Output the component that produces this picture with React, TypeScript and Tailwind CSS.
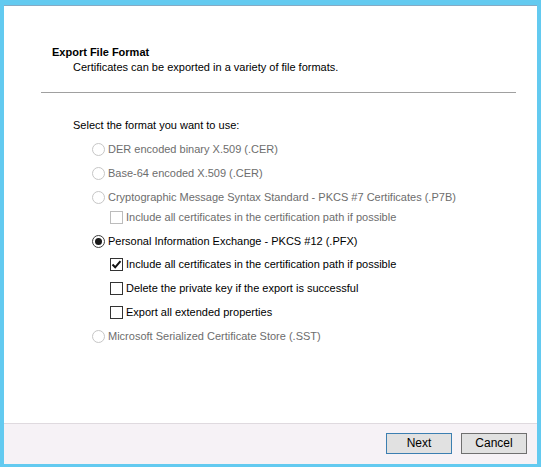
import React from "react";

const font = { fontFamily: '"Liberation Sans", Arial, sans-serif' };

const Radio = ({ checked, disabled }: { checked?: boolean; disabled?: boolean }) => (
  <span
    className={`flex h-[13px] w-[13px] shrink-0 items-center justify-center rounded-full border bg-white ${
      disabled ? "border-[#c6c6c6]" : "border-[#3c3c3c]"
    }`}
  >
    {checked && <span className="h-[7px] w-[7px] rounded-full bg-[#1a1a1a]" />}
  </span>
);

const Check = ({ checked, disabled }: { checked?: boolean; disabled?: boolean }) => (
  <span
    className={`flex h-[13px] w-[13px] shrink-0 items-center justify-center border bg-white ${
      disabled ? "border-[#bcbcbc]" : "border-[#333333]"
    }`}
  >
    {checked && (
      <svg width="11" height="11" viewBox="0 0 11 11">
        <path d="M1.5 5.5 L4.2 8.3 L9.5 2.2" fill="none" stroke="#111" strokeWidth="2" />
      </svg>
    )}
  </span>
);

type Row = {
  kind: "radio" | "check";
  label: string;
  checked?: boolean;
  disabled?: boolean;
  mt: string;
};

const rows: Row[] = [
  { kind: "radio", label: "DER encoded binary X.509 (.CER)", disabled: true, mt: "mt-[8px]" },
  { kind: "radio", label: "Base-64 encoded X.509 (.CER)", disabled: true, mt: "mt-[8px]" },
  {
    kind: "radio",
    label: "Cryptographic Message Syntax Standard - PKCS #7 Certificates (.P7B)",
    disabled: true,
    mt: "mt-[8px]",
  },
  {
    kind: "check",
    label: "Include all certificates in the certification path if possible",
    disabled: true,
    mt: "mt-[4px]",
  },
  { kind: "radio", label: "Personal Information Exchange - PKCS #12 (.PFX)", checked: true, mt: "mt-[8px]" },
  {
    kind: "check",
    label: "Include all certificates in the certification path if possible",
    checked: true,
    mt: "mt-[7px]",
  },
  { kind: "check", label: "Delete the private key if the export is successful", mt: "mt-[8px]" },
  { kind: "check", label: "Export all extended properties", mt: "mt-[8px]" },
  { kind: "radio", label: "Microsoft Serialized Certificate Store (.SST)", disabled: true, mt: "mt-[8px]" },
];

export default function App() {
  return (
    <div
      className="flex h-[467px] w-[541px] flex-col bg-[#63caf0] pb-[3px] pl-[4px] pr-[4px] pt-[5px] text-[11px] text-black"
      style={font}
    >
      <div className="flex flex-1 flex-col border-t border-[#86aac4] bg-white">
        <div className="flex-1 pt-[38px]">
          <div className="pl-[48px] font-bold leading-[16px]">Export File Format</div>
          <div className="mt-[-1px] pl-[69px] leading-[16px]">
            Certificates can be exported in a variety of file formats.
          </div>
          <div className="ml-[37px] mt-[17px] h-px w-[475px] bg-[#a0a0a0]" />
          <div className="mt-[24px] pl-[69px] leading-[16px]">Select the format you want to use:</div>
          {rows.map((r, i) => (
            <div
              key={i}
              className={`flex h-[16px] items-center ${r.mt} ${
                r.kind === "radio" ? "pl-[88px]" : "pl-[106px]"
              } ${r.disabled ? "text-[#6d6d6d]" : "text-black"}`}
            >
              {r.kind === "radio" ? (
                <Radio checked={r.checked} disabled={r.disabled} />
              ) : (
                <Check checked={r.checked} disabled={r.disabled} />
              )}
              <span className="ml-[3px]">{r.label}</span>
            </div>
          ))}
        </div>
        <div className="flex h-[41px] items-start justify-end gap-[9px] border-t border-[#dfdadf] bg-[#f6f2f6] pr-[10px] pt-[9px]">
          <button className="h-[21px] w-[66px] border border-[#3c7fb1] bg-[#e1e1e1] text-[12px] leading-[19px]">
            Next
          </button>
          <button className="h-[21px] w-[66px] border border-[#707070] bg-[#e1e1e1] text-[12px] leading-[19px]">
            Cancel
          </button>
        </div>
      </div>
    </div>
  );
}
